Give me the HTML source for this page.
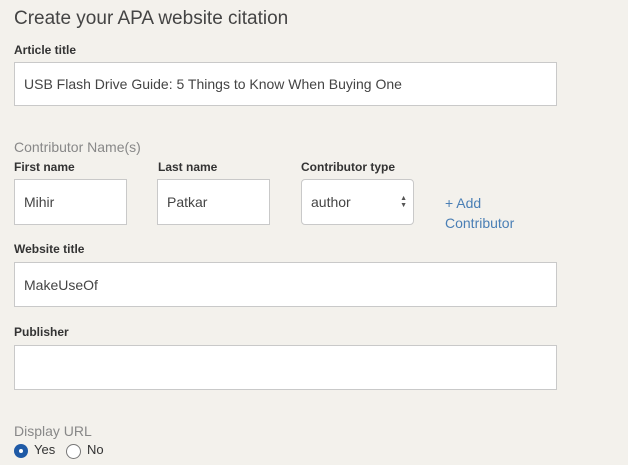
<!DOCTYPE html>
<html><head><style>
body{margin:0;width:628px;height:465px;background:#f3f1ec;font-family:"Liberation Sans",sans-serif;position:relative;overflow:hidden;color:#333}
.a{position:absolute;white-space:nowrap}
.lbl{font-size:12px;font-weight:bold;color:#333}
.box{position:absolute;background:#fff;border:1px solid #c9c9c9;box-sizing:border-box;font-size:14px;color:#444;padding-left:9px;display:flex;align-items:center}
.g{color:#888;font-size:14px}
</style></head><body>
<div class="a" style="left:14px;top:8px;font-size:19px;color:#444">Create your APA website citation</div>
<div class="a lbl" style="left:14px;top:43px">Article title</div>
<div class="box" style="left:14px;top:62px;width:543px;height:44px">USB Flash Drive Guide: 5 Things to Know When Buying One</div>
<div class="a g" style="left:14px;top:139px">Contributor Name(s)</div>
<div class="a lbl" style="left:14px;top:160px">First name</div>
<div class="a lbl" style="left:158px;top:160px">Last name</div>
<div class="a lbl" style="left:301px;top:160px">Contributor type</div>
<div class="box" style="left:14px;top:179px;width:113px;height:46px">Mihir</div>
<div class="box" style="left:157px;top:179px;width:113px;height:46px">Patkar</div>
<div class="box" style="left:301px;top:179px;width:113px;height:46px;border-radius:4px">author<span style="position:absolute;right:6px;top:15px;font-size:7px;line-height:7px;color:#555">▲<br>▼</span></div>
<div class="a" style="left:445px;top:193px;font-size:14px;color:#4a7fb5;line-height:20px">+ Add<br>Contributor</div>
<div class="a lbl" style="left:14px;top:242px">Website title</div>
<div class="box" style="left:14px;top:262px;width:543px;height:45px">MakeUseOf</div>
<div class="a lbl" style="left:14px;top:325px">Publisher</div>
<div class="box" style="left:14px;top:345px;width:543px;height:45px"></div>
<div class="a g" style="left:14px;top:423px">Display URL</div>
<div class="a" style="left:14px;top:444px;width:14px;height:14px;border-radius:50%;background:#1f5aa6;box-sizing:border-box"><div style="position:absolute;left:5px;top:5px;width:4px;height:4px;background:#fff;border-radius:50%"></div></div>
<div class="a" style="left:34px;top:442px;font-size:13px">Yes</div>
<div class="a" style="left:66px;top:444px;width:15px;height:15px;border-radius:50%;border:1px solid #777;box-sizing:border-box;background:#fff"></div>
<div class="a" style="left:87px;top:442px;font-size:13px">No</div>
</body></html>
